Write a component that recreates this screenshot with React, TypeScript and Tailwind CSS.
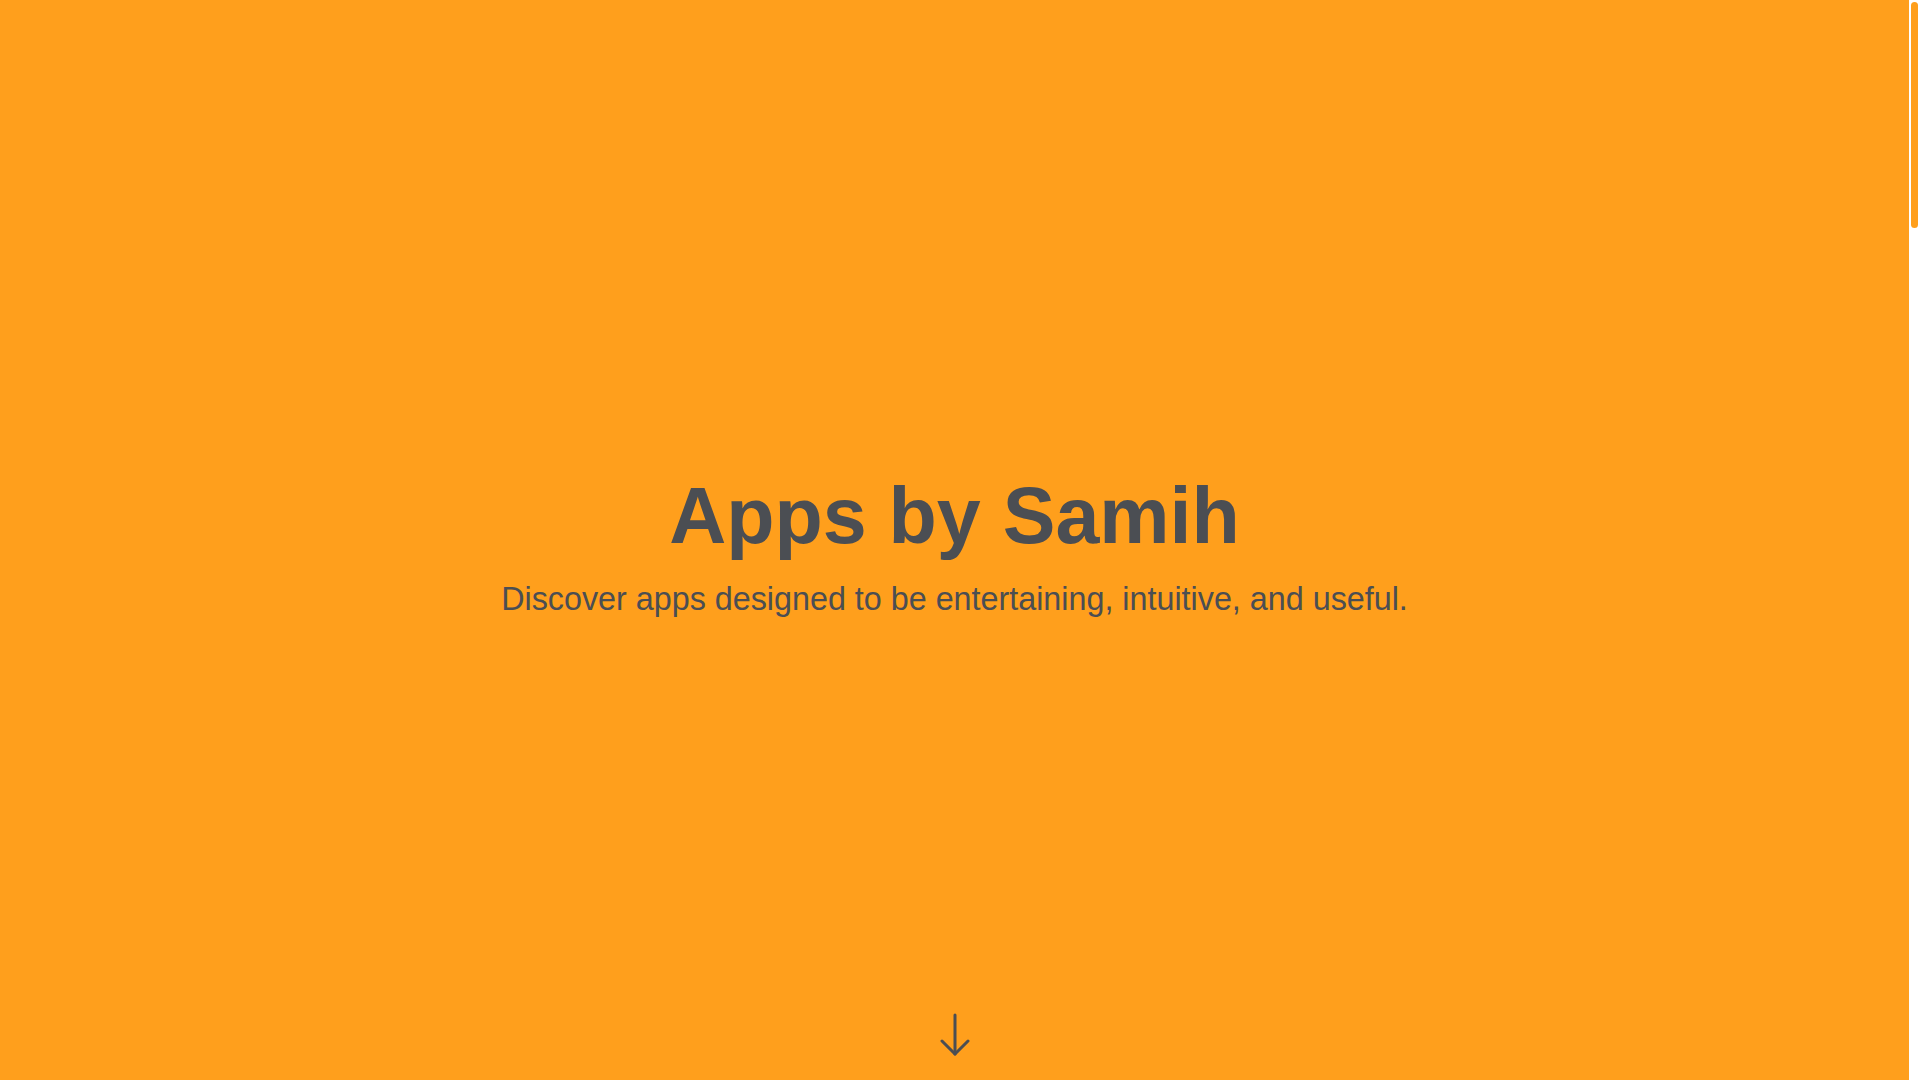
function ArrowDown() {
  return (
    <svg width="30" height="46" viewBox="0 0 30 46" fill="none" stroke="#4b4e53" strokeWidth="3" strokeLinecap="round" strokeLinejoin="round">
      <line x1="15" y1="5" x2="15" y2="44" />
      <polyline points="2,31 15,44 28,31" />
    </svg>
  );
}

export default function App() {
  return (
    <div
      className="flex h-screen overflow-hidden bg-[#ff9f1c] text-[#4b4e53]"
      style={{ fontFamily: '"Liberation Sans", Arial, sans-serif' }}
    >
      <main className="flex-1">
        <section className="grid h-screen grid-rows-[1fr_auto_1fr]">
          <div />
          <div className="flex flex-col items-center text-center">
            <h1 className="text-[79px] font-bold leading-normal">Apps by Samih</h1>
            <p className="text-[32.3px] leading-normal">
              Discover apps designed to be entertaining, intuitive, and useful.
            </p>
          </div>
          <div className="flex items-end justify-center pb-6">
            <ArrowDown />
          </div>
        </section>
      </main>
      <aside className="w-[11px] shrink-0 bg-white px-[2px] pt-[2px]">
        <div className="h-[226px] rounded-full bg-[#ff9f1c]" />
      </aside>
    </div>
  );
}
